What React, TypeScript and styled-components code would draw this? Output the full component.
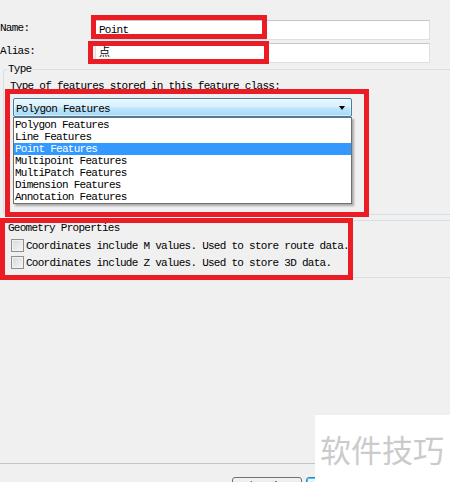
import styled, { createGlobalStyle } from "styled-components";

const GlobalStyle = createGlobalStyle`
  html,
  body {
    margin: 0;
    padding: 0;
    background: #f0f0f0;
  }
`;

const featureTypes = [
  "Polygon Features",
  "Line Features",
  "Point Features",
  "Multipoint Features",
  "MultiPatch Features",
  "Dimension Features",
  "Annotation Features",
];

// red marks drawn over the dialog in the screenshot
const marks = [
  { top: 15, left: 91, width: 176, height: 24 },
  { top: 41, left: 88, width: 181, height: 23 },
  { top: 89, left: 5, width: 364, height: 128 },
  { top: 218, left: 0, width: 353, height: 62 },
];

export default function App() {
  return (
    <>
      <GlobalStyle />
      <Dialog>
        <FieldRow $top={20}>
          <FieldLabel>Name:</FieldLabel>
          <TextBox>Point</TextBox>
        </FieldRow>
        <FieldRow $top={3}>
          <FieldLabel>Alias:</FieldLabel>
          <TextBox>点</TextBox>
        </FieldRow>

        <TypeGroup>
          <Legend>Type</Legend>
          <Hint>Type of features stored in this feature class:</Hint>
          <ComboWrap>
            <Combo>
              Polygon Features
              <Arrow />
            </Combo>
            <DropList>
              {featureTypes.map((t) => (
                <ListItem key={t} $selected={t === "Point Features"}>
                  {t}
                </ListItem>
              ))}
            </DropList>
          </ComboWrap>
        </TypeGroup>

        <GeometryGroup>
          <Caption>Geometry Properties</Caption>
          <CheckRow>
            <CheckBox />
            Coordinates include M values. Used to store route data.
          </CheckRow>
          <CheckRow>
            <CheckBox />
            Coordinates include Z values. Used to store 3D data.
          </CheckRow>
        </GeometryGroup>

        <Footer>
          <WizardButton>&lt; 上一步(B)</WizardButton>
          <WizardButton $primary>下一步(N) &gt;</WizardButton>
        </Footer>

        {marks.map((m, i) => (
          <Mark
            key={i}
            $top={m.top}
            $left={m.left}
            $width={m.width}
            $height={m.height}
          />
        ))}

        <Watermark>软件技巧</Watermark>
      </Dialog>
    </>
  );
}

const Dialog = styled.div`
  position: relative;
  width: 450px;
  height: 482px;
  overflow: hidden;
  display: flex;
  flex-direction: column;
  background: #f0f0f0;
  color: #000;
  font-family: "Liberation Mono", "Noto Sans CJK SC", monospace;
  font-size: 11px;
  line-height: 12px;
  letter-spacing: -0.73px;
`;

const FieldRow = styled.div<{ $top: number }>`
  display: grid;
  grid-template-columns: 95px 335px;
  height: 20px;
  margin-top: ${(p) => p.$top}px;
  flex-shrink: 0;
`;

const FieldLabel = styled.span`
  padding-top: 2px;
`;

const TextBox = styled.div`
  box-sizing: border-box;
  height: 20px;
  padding: 3px 3px 0;
  background: #fff;
  border: 1px solid #dcdfe3;
  border-top-color: #c3c6cb;
  border-radius: 1px;
`;

const TypeGroup = styled.fieldset`
  box-sizing: border-box;
  flex-shrink: 0;
  width: 470px;
  height: 152px;
  min-width: 0;
  margin: 0 0 0 3px;
  padding: 0;
  border: 1px solid #d5dfe5;
  border-radius: 3px;
`;

const Legend = styled.legend`
  margin-left: 3px;
  padding: 0 1px;
  line-height: 12px;
`;

const Hint = styled.div`
  margin: 5px 0 0 6px;
`;

const ComboWrap = styled.div`
  position: relative;
  width: 339px;
  margin: 6px 0 0 9px;
`;

const Combo = styled.div`
  box-sizing: border-box;
  position: relative;
  height: 19px;
  padding: 4px 2px 0;
  border: 1px solid #3c7fb1;
  border-radius: 2px;
  background: linear-gradient(
    to bottom,
    #eaf6fd 0%,
    #d9f0fc 45%,
    #bee6fd 52%,
    #a7d9f5 100%
  );
  box-shadow: inset 0 0 0 1px rgba(255, 255, 255, 0.5);
`;

const Arrow = styled.span`
  position: absolute;
  right: 6px;
  top: 7px;
  width: 0;
  height: 0;
  border-left: 3.5px solid transparent;
  border-right: 3.5px solid transparent;
  border-top: 4px solid #000;
`;

const DropList = styled.div`
  position: absolute;
  top: 100%;
  left: 0;
  width: 100%;
  box-sizing: border-box;
  padding: 1px 0 0;
  background: #fff;
  border: 1px solid #6f6f6f;
  box-shadow: 2px 2px 2px rgba(0, 0, 0, 0.3);
  z-index: 2;
`;

const ListItem = styled.div<{ $selected?: boolean }>`
  height: 12px;
  padding-left: 1px;
  background: ${(p) => (p.$selected ? "#3399ff" : "transparent")};
  color: ${(p) => (p.$selected ? "#fff" : "#000")};
`;

const GeometryGroup = styled.div`
  box-sizing: border-box;
  flex-shrink: 0;
  width: 470px;
  height: 58px;
  margin: 5px 0 0 3px;
  padding: 1px 0 0 4px;
  border: 1px solid #d5dfe5;
  border-radius: 3px;
`;

const Caption = styled.div`
  margin-bottom: 3px;
`;

const CheckRow = styled.div`
  display: flex;
  align-items: center;
  gap: 2px;
  height: 17px;
  padding-left: 3px;
  white-space: nowrap;
`;

const CheckBox = styled.span`
  box-sizing: border-box;
  width: 13px;
  height: 13px;
  flex-shrink: 0;
  border: 1px solid #8e8f8f;
  background: linear-gradient(135deg, #d6d8db, #f7f7f7);
  box-shadow: inset 0 0 0 1px #f2f2f2;
`;

const Footer = styled.div`
  box-sizing: border-box;
  display: flex;
  gap: 4px;
  flex-shrink: 0;
  height: 19px;
  margin-top: auto;
  padding: 13px 0 0 232px;
  border-top: 1px solid #c4c4c4;
`;

const WizardButton = styled.div<{ $primary?: boolean }>`
  box-sizing: border-box;
  flex-shrink: 0;
  width: ${(p) => (p.$primary ? 75 : 70)}px;
  height: 23px;
  padding-top: 3px;
  text-align: center;
  font-family: "Noto Sans CJK SC", sans-serif;
  font-size: 12px;
  letter-spacing: 0;
  border: 1px solid ${(p) => (p.$primary ? "#3c7fb1" : "#707070")};
  border-radius: 3px;
  background: ${(p) =>
    p.$primary
      ? "linear-gradient(#eaf6fd, #bee6fd)"
      : "linear-gradient(#f2f2f2, #dddddd)"};
  box-shadow: ${(p) => (p.$primary ? "inset 0 0 0 1px #48c8f0" : "none")};
`;

const Mark = styled.div<{
  $top: number;
  $left: number;
  $width: number;
  $height: number;
}>`
  position: absolute;
  top: ${(p) => p.$top}px;
  left: ${(p) => p.$left}px;
  width: ${(p) => p.$width}px;
  height: ${(p) => p.$height}px;
  box-sizing: border-box;
  border: 5px solid #ec1c24;
  z-index: 3;
`;

const Watermark = styled.div`
  position: absolute;
  right: 0;
  bottom: 0;
  width: 135px;
  height: 67px;
  box-sizing: border-box;
  padding: 18px 0 0 5px;
  background: #fff;
  color: #cbcbcb;
  font-family: "Noto Sans CJK SC", sans-serif;
  font-size: 31px;
  line-height: 31px;
  letter-spacing: 0;
  white-space: nowrap;
  z-index: 4;
`;
